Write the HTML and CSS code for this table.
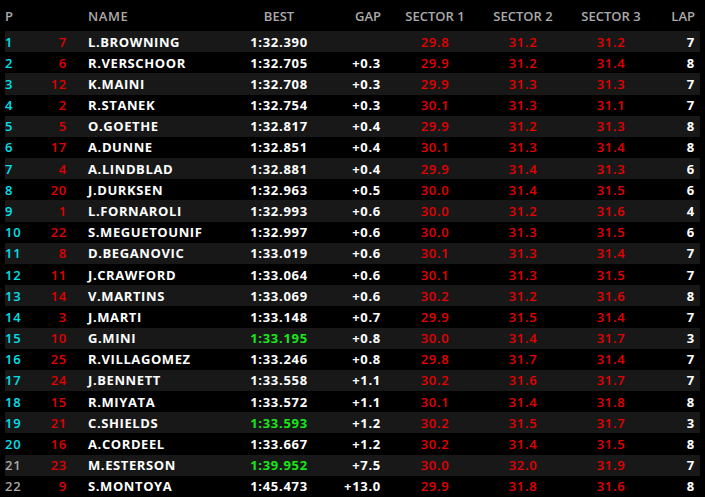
FILE: index.html
```html
<!DOCTYPE html>
<html>
<head>
<meta charset="utf-8">
<link rel="stylesheet" href="styles.css">
</head>
<body>
<div class="board">
  <div class="row head">
    <div class="c pos">P</div><div class="c num"></div><div class="c name">NAME</div><div class="c best">BEST</div><div class="c gap">GAP</div><div class="c sec">SECTOR 1</div><div class="c sec">SECTOR 2</div><div class="c sec">SECTOR 3</div><div class="c lap">LAP</div>
  </div>
  <div class="rows">
    <div class="row"><div class="c pos">1</div><div class="c num">7</div><div class="c name">L.BROWNING</div><div class="c best">1:32.390</div><div class="c gap"></div><div class="c sec">29.8</div><div class="c sec">31.2</div><div class="c sec">31.2</div><div class="c lap">7</div></div>
    <div class="row"><div class="c pos">2</div><div class="c num">6</div><div class="c name">R.VERSCHOOR</div><div class="c best">1:32.705</div><div class="c gap">+0.3</div><div class="c sec">29.9</div><div class="c sec">31.2</div><div class="c sec">31.4</div><div class="c lap">8</div></div>
    <div class="row"><div class="c pos">3</div><div class="c num">12</div><div class="c name">K.MAINI</div><div class="c best">1:32.708</div><div class="c gap">+0.3</div><div class="c sec">29.9</div><div class="c sec">31.3</div><div class="c sec">31.3</div><div class="c lap">7</div></div>
    <div class="row"><div class="c pos">4</div><div class="c num">2</div><div class="c name">R.STANEK</div><div class="c best">1:32.754</div><div class="c gap">+0.3</div><div class="c sec">30.1</div><div class="c sec">31.3</div><div class="c sec">31.1</div><div class="c lap">7</div></div>
    <div class="row"><div class="c pos">5</div><div class="c num">5</div><div class="c name">O.GOETHE</div><div class="c best">1:32.817</div><div class="c gap">+0.4</div><div class="c sec">29.9</div><div class="c sec">31.2</div><div class="c sec">31.3</div><div class="c lap">8</div></div>
    <div class="row"><div class="c pos">6</div><div class="c num">17</div><div class="c name">A.DUNNE</div><div class="c best">1:32.851</div><div class="c gap">+0.4</div><div class="c sec">30.1</div><div class="c sec">31.3</div><div class="c sec">31.4</div><div class="c lap">8</div></div>
    <div class="row"><div class="c pos">7</div><div class="c num">4</div><div class="c name">A.LINDBLAD</div><div class="c best">1:32.881</div><div class="c gap">+0.4</div><div class="c sec">29.9</div><div class="c sec">31.4</div><div class="c sec">31.3</div><div class="c lap">6</div></div>
    <div class="row"><div class="c pos">8</div><div class="c num">20</div><div class="c name">J.DURKSEN</div><div class="c best">1:32.963</div><div class="c gap">+0.5</div><div class="c sec">30.0</div><div class="c sec">31.4</div><div class="c sec">31.5</div><div class="c lap">6</div></div>
    <div class="row"><div class="c pos">9</div><div class="c num">1</div><div class="c name">L.FORNAROLI</div><div class="c best">1:32.993</div><div class="c gap">+0.6</div><div class="c sec">30.0</div><div class="c sec">31.2</div><div class="c sec">31.6</div><div class="c lap">4</div></div>
    <div class="row"><div class="c pos">10</div><div class="c num">22</div><div class="c name">S.MEGUETOUNIF</div><div class="c best">1:32.997</div><div class="c gap">+0.6</div><div class="c sec">30.0</div><div class="c sec">31.3</div><div class="c sec">31.5</div><div class="c lap">6</div></div>
    <div class="row"><div class="c pos">11</div><div class="c num">8</div><div class="c name">D.BEGANOVIC</div><div class="c best">1:33.019</div><div class="c gap">+0.6</div><div class="c sec">30.1</div><div class="c sec">31.3</div><div class="c sec">31.4</div><div class="c lap">7</div></div>
    <div class="row"><div class="c pos">12</div><div class="c num">11</div><div class="c name">J.CRAWFORD</div><div class="c best">1:33.064</div><div class="c gap">+0.6</div><div class="c sec">30.1</div><div class="c sec">31.3</div><div class="c sec">31.5</div><div class="c lap">7</div></div>
    <div class="row"><div class="c pos">13</div><div class="c num">14</div><div class="c name">V.MARTINS</div><div class="c best">1:33.069</div><div class="c gap">+0.6</div><div class="c sec">30.2</div><div class="c sec">31.2</div><div class="c sec">31.6</div><div class="c lap">8</div></div>
    <div class="row"><div class="c pos">14</div><div class="c num">3</div><div class="c name">J.MARTI</div><div class="c best">1:33.148</div><div class="c gap">+0.7</div><div class="c sec">29.9</div><div class="c sec">31.5</div><div class="c sec">31.4</div><div class="c lap">7</div></div>
    <div class="row"><div class="c pos">15</div><div class="c num">10</div><div class="c name">G.MINI</div><div class="c best pb">1:33.195</div><div class="c gap">+0.8</div><div class="c sec">30.0</div><div class="c sec">31.4</div><div class="c sec">31.7</div><div class="c lap">3</div></div>
    <div class="row"><div class="c pos">16</div><div class="c num">25</div><div class="c name">R.VILLAGOMEZ</div><div class="c best">1:33.246</div><div class="c gap">+0.8</div><div class="c sec">29.8</div><div class="c sec">31.7</div><div class="c sec">31.4</div><div class="c lap">7</div></div>
    <div class="row"><div class="c pos">17</div><div class="c num">24</div><div class="c name">J.BENNETT</div><div class="c best">1:33.558</div><div class="c gap">+1.1</div><div class="c sec">30.2</div><div class="c sec">31.6</div><div class="c sec">31.7</div><div class="c lap">7</div></div>
    <div class="row"><div class="c pos">18</div><div class="c num">15</div><div class="c name">R.MIYATA</div><div class="c best">1:33.572</div><div class="c gap">+1.1</div><div class="c sec">30.1</div><div class="c sec">31.4</div><div class="c sec">31.8</div><div class="c lap">8</div></div>
    <div class="row"><div class="c pos">19</div><div class="c num">21</div><div class="c name">C.SHIELDS</div><div class="c best pb">1:33.593</div><div class="c gap">+1.2</div><div class="c sec">30.2</div><div class="c sec">31.5</div><div class="c sec">31.7</div><div class="c lap">3</div></div>
    <div class="row"><div class="c pos">20</div><div class="c num">16</div><div class="c name">A.CORDEEL</div><div class="c best">1:33.667</div><div class="c gap">+1.2</div><div class="c sec">30.2</div><div class="c sec">31.4</div><div class="c sec">31.5</div><div class="c lap">8</div></div>
    <div class="row"><div class="c pos out">21</div><div class="c num">23</div><div class="c name">M.ESTERSON</div><div class="c best pb">1:39.952</div><div class="c gap">+7.5</div><div class="c sec">30.0</div><div class="c sec">32.0</div><div class="c sec">31.9</div><div class="c lap">7</div></div>
    <div class="row"><div class="c pos out">22</div><div class="c num">9</div><div class="c name">S.MONTOYA</div><div class="c best">1:45.473</div><div class="c gap">+13.0</div><div class="c sec">29.9</div><div class="c sec">31.8</div><div class="c sec">31.6</div><div class="c lap">8</div></div>
  </div>
</div>
</body>
</html>
```

FILE: styles.css
```css
html, body {
  margin: 0;
  padding: 0;
  background: #000;
  height: 497px;
  overflow: hidden;
}
body {
  font-family: "Open Sans", "DejaVu Sans", sans-serif;
  font-size: 13px;
  font-weight: 700;
  color: #fff;
}
.board {
  height: 497px;
  display: flex;
  flex-direction: column;
  padding: 0 5px;
}
.row {
  display: grid;
  grid-template-columns: 35px 27px 163px 98px 63px 88px 88px 88px 45px;
  align-items: center;
  letter-spacing: 0.7px;
  white-space: nowrap;
}
.head {
  height: 31px;
  flex: none;
  color: #aaa;
  font-weight: 600;
  letter-spacing: 0;
}
.rows {
  flex: 1;
  display: grid;
  grid-auto-rows: 1fr;
}
.rows .row:nth-child(odd) {
  background: #181818;
}
.c { line-height: 16px; }
.pos { color: #00e1ef; font-weight: 600; }
.pos.out { color: #a8a8a8; }
.head .pos { color: #aaa; }
.num { color: #e00000; font-weight: 600; text-align: right; }
.name { padding-left: 21px; letter-spacing: 0.6px; }
.best { text-align: center; }
.best.pb { color: #19e619; }
.gap { text-align: right; padding-right: 10px; }
.sec { text-align: center; color: #e40000; font-weight: 600; }
.head .sec { color: #aaa; }
.lap { text-align: right; padding-right: 5px; }
```
